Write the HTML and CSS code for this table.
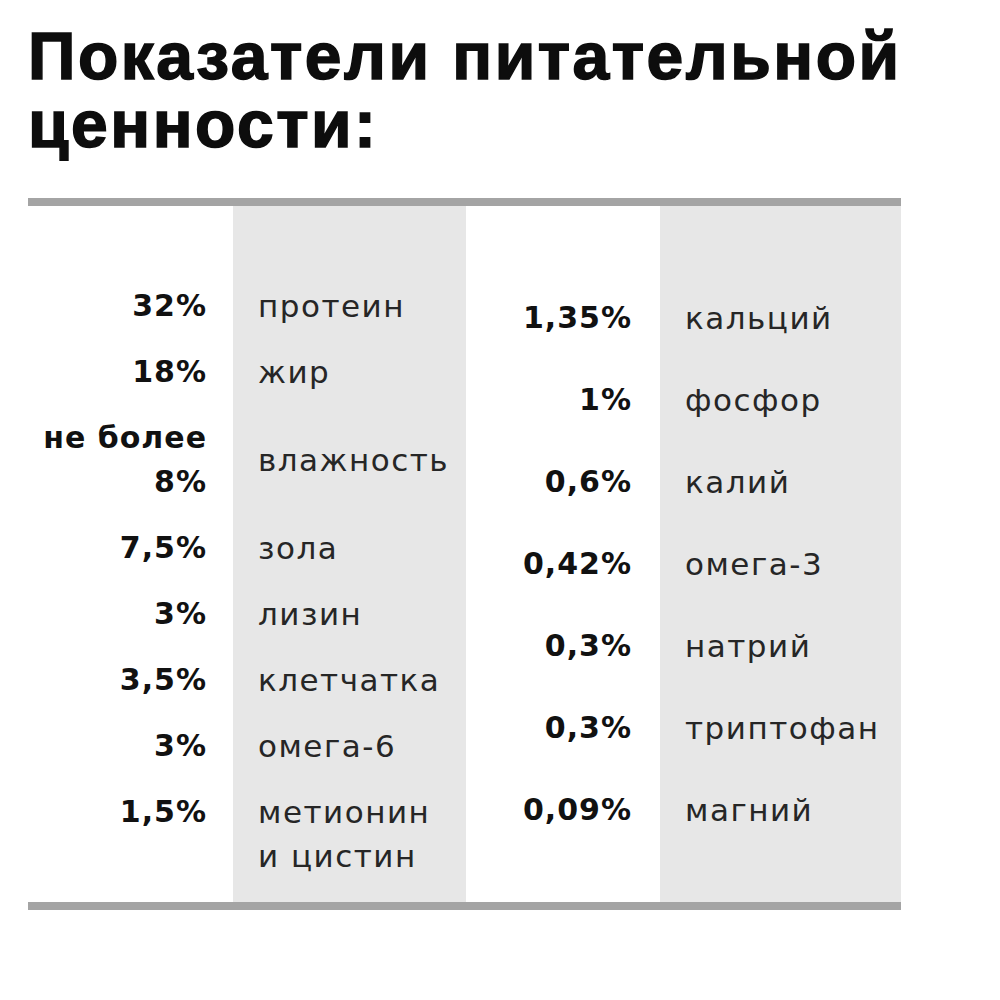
FILE: index.html
```html
<!DOCTYPE html>
<html lang="ru">
<head>
<meta charset="utf-8">
<title>Показатели питательной ценности</title>
<link rel="stylesheet" href="styles.css">
</head>
<body>
<main class="page">
  <h1 class="title">Показатели питательной<br>ценности:</h1>
  <div class="rule"></div>
  <section class="table">
    <div class="panel panel-left">
      <div class="val">32%</div><div class="lbl">протеин</div>
      <div class="val">18%</div><div class="lbl">жир</div>
      <div class="val">не более<br>8%</div><div class="lbl lbl-center">влажность</div>
      <div class="val">7,5%</div><div class="lbl">зола</div>
      <div class="val">3%</div><div class="lbl">лизин</div>
      <div class="val">3,5%</div><div class="lbl">клетчатка</div>
      <div class="val">3%</div><div class="lbl">омега-6</div>
      <div class="val">1,5%</div><div class="lbl">метионин<br>и цистин</div>
    </div>
    <div class="panel panel-right">
      <div class="val">1,35%</div><div class="lbl">кальций</div>
      <div class="val">1%</div><div class="lbl">фосфор</div>
      <div class="val">0,6%</div><div class="lbl">калий</div>
      <div class="val">0,42%</div><div class="lbl">омега-3</div>
      <div class="val">0,3%</div><div class="lbl">натрий</div>
      <div class="val">0,3%</div><div class="lbl">триптофан</div>
      <div class="val">0,09%</div><div class="lbl">магний</div>
    </div>
  </section>
  <div class="rule"></div>
</main>
</body>
</html>
```

FILE: styles.css
```css
html, body {
  margin: 0;
  padding: 0;
  background: #ffffff;
}

.page {
  width: 873px;
  padding: 22px 0 0 28px;
}

.title {
  margin: 0 0 40px 0;
  font-family: "Liberation Sans", Arial, sans-serif;
  font-weight: 700;
  font-size: 66px;
  line-height: 68px;
  letter-spacing: 2.5px;
  color: #0d0d0d;
  -webkit-text-stroke: 1.5px #0d0d0d;
  white-space: nowrap;
}

.rule {
  height: 8px;
  background: #a4a4a4;
}

.table {
  display: flex;
  align-items: stretch;
}

.panel {
  display: grid;
  align-content: start;
  align-items: start;
  font-family: "DejaVu Sans", sans-serif;
  line-height: 44px;
}

.panel-left {
  width: 438px;
  grid-template-columns: 205px 233px;
  row-gap: 22px;
  padding: 78px 0 24px 0;
  background: linear-gradient(to right, #ffffff 205px, #e7e7e7 205px);
}

.panel-right {
  width: 435px;
  grid-template-columns: 194px 241px;
  row-gap: 38px;
  padding: 90px 0 24px 0;
  background: linear-gradient(to right, #ffffff 194px, #e7e7e7 194px);
}

.val {
  font-size: 30px;
  font-weight: 700;
  color: #111111;
  text-align: right;
  letter-spacing: 1px;
}

.panel-left .val {
  padding-right: 26px;
}

.panel-right .val {
  padding-right: 28px;
}

.lbl {
  font-size: 31px;
  padding-left: 25px;
  color: #262626;
  letter-spacing: 1.5px;
}

.lbl-center {
  align-self: center;
}
```
